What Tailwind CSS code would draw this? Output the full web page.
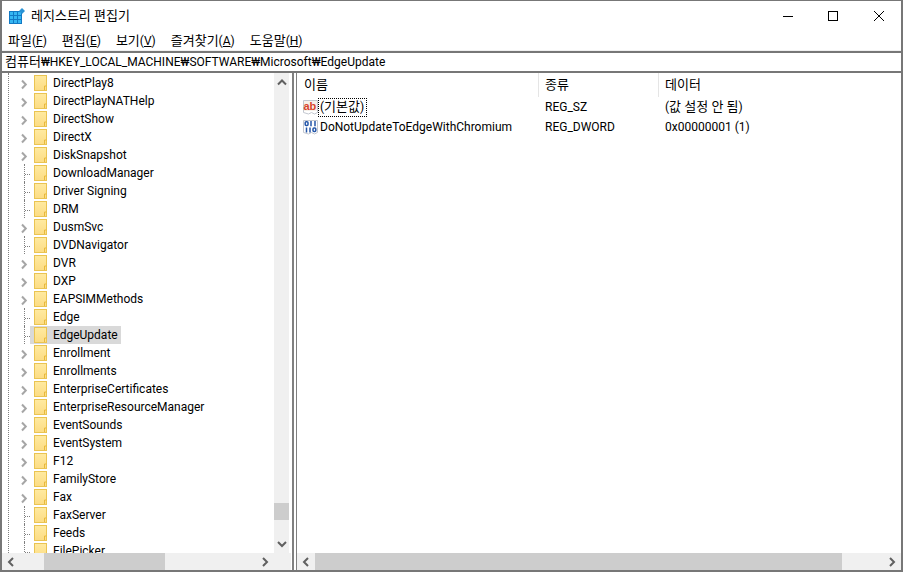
<!DOCTYPE html>
<html><head><meta charset="utf-8"><script src="https://cdn.jsdelivr.net/npm/@tailwindcss/browser@4"></script></head>
<body class="m-0 w-[903px] h-[572px] overflow-hidden bg-white font-['Roboto','Noto_Sans_CJK_KR',sans-serif] text-[12px] text-[#000]">
<svg width="0" height="0" class="absolute"><defs>
<linearGradient id="fg" x1="0" y1="0" x2="0" y2="1"><stop offset="0" stop-color="#ffeaa0"/><stop offset="1" stop-color="#fcdc84"/></linearGradient>
<symbol id="fo" viewBox="0 0 13 16"><rect x=".5" y=".5" width="12" height="15" fill="url(#fg)" stroke="#eac452"/><path d="M10.5 15v-4h2" fill="none" stroke="#e8b93c"/></symbol>
<symbol id="ch" viewBox="0 0 10 18"><path d="M2 6.5l3.8 4-3.8 4" fill="none" stroke="#a6a6a6" stroke-width="2"/></symbol>
</defs></svg>
<div class="w-[903px] h-[572px] flex flex-col border-t border-[#777] border-x-2 border-b-2">
<div class="h-[30px] flex items-center pl-[7px] shrink-0">
<svg width="16" height="16" viewBox="0 0 16 16" class="mr-[6px] shrink-0"><rect x="0" y="3" width="13" height="13" fill="#1279c4"/><path d="M1 4h3v3H1zM5 4h3v3H5zM9 4h3v3H9zM1 8h3v3H1zM5 8h3v3H5zM9 8h3v3H9zM1 12h3v3H1zM5 12h3v3H5zM9 12h3v3H9z" fill="#35b6f2"/><path d="M13 0l3 3-3 3-3-3z" fill="#2a93d5"/></svg>
<span class="text-[13px] leading-none -mt-[2px]">레지스트리 편집기</span>
<div class="ml-auto flex items-center">
<svg width="10" height="10" viewBox="0 0 10 10" class="mr-[35px]"><path d="M0 5.5h10" stroke="#000"/></svg>
<svg width="10" height="10" viewBox="0 0 10 10" class="mr-[36px]"><rect x=".5" y=".5" width="9" height="9" fill="none" stroke="#000"/></svg>
<svg width="10" height="10" viewBox="0 0 10 10" class="mr-[17px]"><path d="M0 0l10 10M10 0L0 10" stroke="#000"/></svg>
</div>
</div>
<div class="h-[20px] flex items-center pl-[6px] gap-[15px] shrink-0 border-b border-[#f0f0f0]">
<span><span class="text-[13px]">파일</span>(<span class="underline">F</span>)</span>
<span><span class="text-[13px]">편집</span>(<span class="underline">E</span>)</span>
<span><span class="text-[13px]">보기</span>(<span class="underline">V</span>)</span>
<span><span class="text-[13px]">즐겨찾기</span>(<span class="underline">A</span>)</span>
<span><span class="text-[13px]">도움말</span>(<span class="underline">H</span>)</span>
</div>
<div class="h-[22px] flex items-center pl-[3px] border-y-2 border-[#777] shrink-0 overflow-hidden"><span><span class="text-[13px]">컴퓨터</span>₩HKEY_LOCAL_MACHINE₩SOFTWARE₩Microsoft₩EdgeUpdate</span></div>
<div class="flex-1 flex min-h-0">
<div class="w-[289px] flex flex-col shrink-0">
<div class="flex-1 flex min-h-0">
<div class="w-[272px] overflow-hidden pt-[1px] relative">
<div class="absolute left-[6px] top-0 bottom-0 border-l border-dotted border-[#808080]"></div>
<div class="h-[18px] flex"><div class="w-[18px]"></div><svg width="10" height="18" class="shrink-0"><use href="#ch"/></svg><div class="flex items-center pl-[4px] pr-[3px] gap-[6px]"><svg width="13" height="16"><use href="#fo"/></svg><span class="-mt-[1px]">DirectPlay8</span></div></div>
<div class="h-[18px] flex"><div class="w-[18px]"></div><svg width="10" height="18" class="shrink-0"><use href="#ch"/></svg><div class="flex items-center pl-[4px] pr-[3px] gap-[6px]"><svg width="13" height="16"><use href="#fo"/></svg><span class="-mt-[1px]">DirectPlayNATHelp</span></div></div>
<div class="h-[18px] flex"><div class="w-[18px]"></div><svg width="10" height="18" class="shrink-0"><use href="#ch"/></svg><div class="flex items-center pl-[4px] pr-[3px] gap-[6px]"><svg width="13" height="16"><use href="#fo"/></svg><span class="-mt-[1px]">DirectShow</span></div></div>
<div class="h-[18px] flex"><div class="w-[18px]"></div><svg width="10" height="18" class="shrink-0"><use href="#ch"/></svg><div class="flex items-center pl-[4px] pr-[3px] gap-[6px]"><svg width="13" height="16"><use href="#fo"/></svg><span class="-mt-[1px]">DirectX</span></div></div>
<div class="h-[18px] flex"><div class="w-[18px]"></div><svg width="10" height="18" class="shrink-0"><use href="#ch"/></svg><div class="flex items-center pl-[4px] pr-[3px] gap-[6px]"><svg width="13" height="16"><use href="#fo"/></svg><span class="-mt-[1px]">DiskSnapshot</span></div></div>
<div class="h-[18px] flex"><div class="w-[18px]"></div><div class="w-[10px] pl-[4px] shrink-0"><div class="h-full border-l border-dotted border-[#808080] pt-[10px]"><div class="border-t border-dotted border-[#808080]"></div></div></div><div class="flex items-center pl-[4px] pr-[3px] gap-[6px]"><svg width="13" height="16"><use href="#fo"/></svg><span class="-mt-[1px]">DownloadManager</span></div></div>
<div class="h-[18px] flex"><div class="w-[18px]"></div><div class="w-[10px] pl-[4px] shrink-0"><div class="h-full border-l border-dotted border-[#808080] pt-[10px]"><div class="border-t border-dotted border-[#808080]"></div></div></div><div class="flex items-center pl-[4px] pr-[3px] gap-[6px]"><svg width="13" height="16"><use href="#fo"/></svg><span class="-mt-[1px]">Driver Signing</span></div></div>
<div class="h-[18px] flex"><div class="w-[18px]"></div><div class="w-[10px] pl-[4px] shrink-0"><div class="h-full border-l border-dotted border-[#808080] pt-[10px]"><div class="border-t border-dotted border-[#808080]"></div></div></div><div class="flex items-center pl-[4px] pr-[3px] gap-[6px]"><svg width="13" height="16"><use href="#fo"/></svg><span class="-mt-[1px]">DRM</span></div></div>
<div class="h-[18px] flex"><div class="w-[18px]"></div><svg width="10" height="18" class="shrink-0"><use href="#ch"/></svg><div class="flex items-center pl-[4px] pr-[3px] gap-[6px]"><svg width="13" height="16"><use href="#fo"/></svg><span class="-mt-[1px]">DusmSvc</span></div></div>
<div class="h-[18px] flex"><div class="w-[18px]"></div><div class="w-[10px] pl-[4px] shrink-0"><div class="h-full border-l border-dotted border-[#808080] pt-[10px]"><div class="border-t border-dotted border-[#808080]"></div></div></div><div class="flex items-center pl-[4px] pr-[3px] gap-[6px]"><svg width="13" height="16"><use href="#fo"/></svg><span class="-mt-[1px]">DVDNavigator</span></div></div>
<div class="h-[18px] flex"><div class="w-[18px]"></div><svg width="10" height="18" class="shrink-0"><use href="#ch"/></svg><div class="flex items-center pl-[4px] pr-[3px] gap-[6px]"><svg width="13" height="16"><use href="#fo"/></svg><span class="-mt-[1px]">DVR</span></div></div>
<div class="h-[18px] flex"><div class="w-[18px]"></div><svg width="10" height="18" class="shrink-0"><use href="#ch"/></svg><div class="flex items-center pl-[4px] pr-[3px] gap-[6px]"><svg width="13" height="16"><use href="#fo"/></svg><span class="-mt-[1px]">DXP</span></div></div>
<div class="h-[18px] flex"><div class="w-[18px]"></div><svg width="10" height="18" class="shrink-0"><use href="#ch"/></svg><div class="flex items-center pl-[4px] pr-[3px] gap-[6px]"><svg width="13" height="16"><use href="#fo"/></svg><span class="-mt-[1px]">EAPSIMMethods</span></div></div>
<div class="h-[18px] flex"><div class="w-[18px]"></div><div class="w-[10px] pl-[4px] shrink-0"><div class="h-full border-l border-dotted border-[#808080] pt-[10px]"><div class="border-t border-dotted border-[#808080]"></div></div></div><div class="flex items-center pl-[4px] pr-[3px] gap-[6px]"><svg width="13" height="16"><use href="#fo"/></svg><span class="-mt-[1px]">Edge</span></div></div>
<div class="h-[18px] flex"><div class="w-[18px]"></div><div class="w-[10px] pl-[4px] shrink-0"><div class="h-full border-l border-dotted border-[#808080] pt-[10px]"><div class="border-t border-dotted border-[#808080]"></div></div></div><div class="flex items-center pl-[4px] pr-[3px] gap-[6px] bg-[#d9d9d9]"><svg width="13" height="16"><use href="#fo"/></svg><span class="-mt-[1px]">EdgeUpdate</span></div></div>
<div class="h-[18px] flex"><div class="w-[18px]"></div><svg width="10" height="18" class="shrink-0"><use href="#ch"/></svg><div class="flex items-center pl-[4px] pr-[3px] gap-[6px]"><svg width="13" height="16"><use href="#fo"/></svg><span class="-mt-[1px]">Enrollment</span></div></div>
<div class="h-[18px] flex"><div class="w-[18px]"></div><svg width="10" height="18" class="shrink-0"><use href="#ch"/></svg><div class="flex items-center pl-[4px] pr-[3px] gap-[6px]"><svg width="13" height="16"><use href="#fo"/></svg><span class="-mt-[1px]">Enrollments</span></div></div>
<div class="h-[18px] flex"><div class="w-[18px]"></div><svg width="10" height="18" class="shrink-0"><use href="#ch"/></svg><div class="flex items-center pl-[4px] pr-[3px] gap-[6px]"><svg width="13" height="16"><use href="#fo"/></svg><span class="-mt-[1px]">EnterpriseCertificates</span></div></div>
<div class="h-[18px] flex"><div class="w-[18px]"></div><svg width="10" height="18" class="shrink-0"><use href="#ch"/></svg><div class="flex items-center pl-[4px] pr-[3px] gap-[6px]"><svg width="13" height="16"><use href="#fo"/></svg><span class="-mt-[1px]">EnterpriseResourceManager</span></div></div>
<div class="h-[18px] flex"><div class="w-[18px]"></div><svg width="10" height="18" class="shrink-0"><use href="#ch"/></svg><div class="flex items-center pl-[4px] pr-[3px] gap-[6px]"><svg width="13" height="16"><use href="#fo"/></svg><span class="-mt-[1px]">EventSounds</span></div></div>
<div class="h-[18px] flex"><div class="w-[18px]"></div><svg width="10" height="18" class="shrink-0"><use href="#ch"/></svg><div class="flex items-center pl-[4px] pr-[3px] gap-[6px]"><svg width="13" height="16"><use href="#fo"/></svg><span class="-mt-[1px]">EventSystem</span></div></div>
<div class="h-[18px] flex"><div class="w-[18px]"></div><svg width="10" height="18" class="shrink-0"><use href="#ch"/></svg><div class="flex items-center pl-[4px] pr-[3px] gap-[6px]"><svg width="13" height="16"><use href="#fo"/></svg><span class="-mt-[1px]">F12</span></div></div>
<div class="h-[18px] flex"><div class="w-[18px]"></div><svg width="10" height="18" class="shrink-0"><use href="#ch"/></svg><div class="flex items-center pl-[4px] pr-[3px] gap-[6px]"><svg width="13" height="16"><use href="#fo"/></svg><span class="-mt-[1px]">FamilyStore</span></div></div>
<div class="h-[18px] flex"><div class="w-[18px]"></div><svg width="10" height="18" class="shrink-0"><use href="#ch"/></svg><div class="flex items-center pl-[4px] pr-[3px] gap-[6px]"><svg width="13" height="16"><use href="#fo"/></svg><span class="-mt-[1px]">Fax</span></div></div>
<div class="h-[18px] flex"><div class="w-[18px]"></div><div class="w-[10px] pl-[4px] shrink-0"><div class="h-full border-l border-dotted border-[#808080] pt-[10px]"><div class="border-t border-dotted border-[#808080]"></div></div></div><div class="flex items-center pl-[4px] pr-[3px] gap-[6px]"><svg width="13" height="16"><use href="#fo"/></svg><span class="-mt-[1px]">FaxServer</span></div></div>
<div class="h-[18px] flex"><div class="w-[18px]"></div><div class="w-[10px] pl-[4px] shrink-0"><div class="h-full border-l border-dotted border-[#808080] pt-[10px]"><div class="border-t border-dotted border-[#808080]"></div></div></div><div class="flex items-center pl-[4px] pr-[3px] gap-[6px]"><svg width="13" height="16"><use href="#fo"/></svg><span class="-mt-[1px]">Feeds</span></div></div>
<div class="h-[18px] flex"><div class="w-[18px]"></div><div class="w-[10px] pl-[4px] shrink-0"><div class="h-full border-l border-dotted border-[#808080] pt-[10px]"><div class="border-t border-dotted border-[#808080]"></div></div></div><div class="flex items-center pl-[4px] pr-[3px] gap-[6px]"><svg width="13" height="16"><use href="#fo"/></svg><span class="-mt-[1px]">FilePicker</span></div></div>
</div>
<div class="w-[15px] bg-[#f0f0f0] flex flex-col items-center justify-between relative shrink-0">
<svg width="10" height="17" viewBox="0 0 10 17" class="shrink-0"><path d="M1 11.5l4-4 4 4" fill="none" stroke="#606060" stroke-width="2"/></svg>
<div class="absolute top-[430px] left-0 w-full h-[17px] bg-[#cdcdcd]"></div>
<svg width="10" height="17" viewBox="0 0 10 17" class="shrink-0"><path d="M1 6l4 4 4-4" fill="none" stroke="#606060" stroke-width="2"/></svg>
</div>
</div>
<div class="h-[17px] bg-[#f0f0f0] flex items-center shrink-0">
<svg width="8" height="10" viewBox="0 0 8 10" class="ml-[5px] shrink-0"><path d="M6 1L2 5l4 4" fill="none" stroke="#606060" stroke-width="2"/></svg>
<div class="ml-[29px] w-[121px] h-full bg-[#cdcdcd]"></div>
<svg width="8" height="10" viewBox="0 0 8 10" class="ml-[96px] shrink-0"><path d="M2 1l4 4-4 4" fill="none" stroke="#606060" stroke-width="2"/></svg>
</div>
</div>
<div class="w-[2px] ml-[1px] bg-[#808080] shrink-0"></div>
<div class="flex-1 min-w-0 flex flex-col ml-[2px] border-l border-[#808080]">
<div class="flex-1 min-h-0">
<div class="h-[24px] flex">
<div class="w-[242px] pl-[7px] flex items-center border-r border-[#e5e5e5] text-[13px]">이름</div>
<div class="w-[120px] pl-[6px] flex items-center border-r border-[#e5e5e5] text-[13px]">종류</div>
<div class="pl-[6px] flex items-center text-[13px]">데이터</div>
</div>
<div class="h-[20px] flex items-center">
<div class="w-[242px] pl-[6px] flex items-center">
<svg width="15" height="16" viewBox="0 0 15 16" class="shrink-0"><path d="M.5 1.5h14v12l-3 1.5-3-1.5-3 1.5-5-1.5z" fill="#fff" stroke="#c3c7cf"/><rect x="1" y="2" width="13" height="10" fill="#f6f1ea"/><text x="0.5" y="10.5" font-size="11" font-weight="700" fill="#d8432a" font-family="Liberation Sans">ab</text></svg>
<span class="border border-dotted border-black pl-[1px] pr-[2px] h-[19px] flex items-center"><span>(<span class="text-[13px]">기본값</span>)</span></span>
</div>
<div class="w-[120px] pl-[6px]">REG_SZ</div>
<div class="pl-[6px]">(<span class="text-[13px]">값 설정 안 됨</span>)</div>
</div>
<div class="h-[20px] flex items-center">
<div class="w-[242px] pl-[6px] flex items-center">
<svg width="15" height="16" viewBox="0 0 15 16" class="shrink-0"><path d="M.5 1.5h14v12l-3 1.5-3-1.5-3 1.5-5-1.5z" fill="#fff" stroke="#c3c7cf"/><g fill="none" stroke="#2456a8" stroke-width="1.5"><rect x="2.2" y="2.8" width="2.8" height="3.6" rx="1"/><path d="M8 2v5.2M12 2v5.2M3.5 8.5v5M7 8.5v5"/><rect x="10" y="9" width="2.8" height="3.6" rx="1"/></g></svg>
<span class="ml-[2px]">DoNotUpdateToEdgeWithChromium</span>
</div>
<div class="w-[120px] pl-[6px]">REG_DWORD</div>
<div class="pl-[6px]">0x00000001 (1)</div>
</div>
</div>
<div class="h-[17px] bg-[#f0f0f0] flex items-center shrink-0">
<svg width="8" height="10" viewBox="0 0 8 10" class="ml-[5px] shrink-0"><path d="M6 1L2 5l4 4" fill="none" stroke="#606060" stroke-width="2"/></svg>
<div class="ml-[5px] w-[527px] h-full bg-[#cdcdcd]"></div>
<svg width="8" height="10" viewBox="0 0 8 10" class="ml-[46px] shrink-0"><path d="M2 1l4 4-4 4" fill="none" stroke="#606060" stroke-width="2"/></svg>
</div>
</div>
</div>
</div>
</body></html>
